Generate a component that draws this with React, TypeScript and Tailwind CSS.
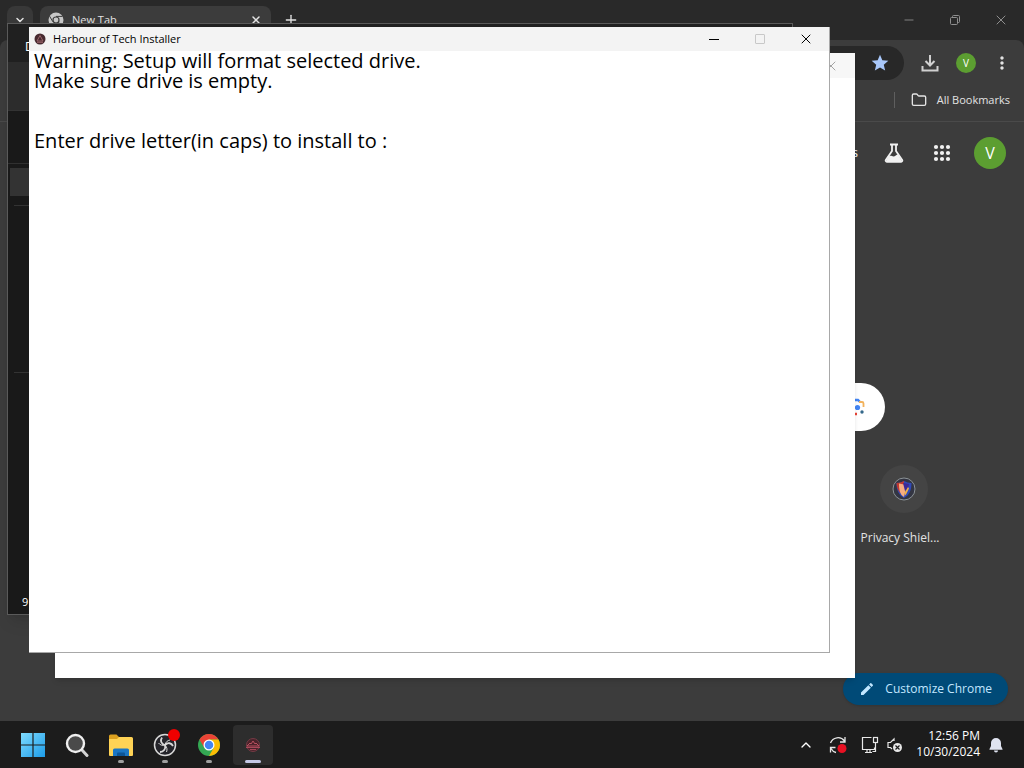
import React from 'react';
import { ChevronDown, ChevronUp, Folder, Minus, Plus, X } from 'lucide-react';
import { MdEdit, MdMoreVert, MdStar } from 'react-icons/md';

const ChromeLogo: React.FC = () => (
  <svg viewBox="0 0 48 48" className="w-6 h-6">
    <circle cx="24" cy="24" r="22" fill="#34a853" />
    <path d="M4.95 13 14.5 29.5 24 24V13H43.05A22 22 0 0 0 4.95 13Z" fill="#ea4335" />
    <path d="M43.05 13H24L33.5 29.5 24 46A22 22 0 0 0 43.05 13Z" fill="#fbbc04" />
    <circle cx="24" cy="24" r="11" fill="#fff" />
    <circle cx="24" cy="24" r="8.5" fill="#4285f4" />
  </svg>
);

const TabFavicon: React.FC = () => (
  <svg viewBox="0 0 16 16" className="w-4 h-4">
    <circle cx="8" cy="8" r="7.5" fill="#c7c7c7" />
    <circle cx="8" cy="8" r="3.6" fill="#3c3c3c" />
    <circle cx="8" cy="8" r="2.4" fill="#c7c7c7" />
    <path d="M8 4.400h6.500M4.900 9.800 1.600 4.200M11.100 9.800 8 15.300" stroke="#3c3c3c" />
  </svg>
);

const LensIcon: React.FC = () => (
  <svg viewBox="0 0 24 24" className="w-6 h-6" fill="none" strokeWidth="2.4">
    <path d="M4 10V8a3 3 0 0 1 3-3" stroke="#ea4335" />
    <path d="M4 14v2a3 3 0 0 0 3 3h5" stroke="#ea4335" />
    <path d="M8 5h5l2 2" stroke="#4285f4" />
    <path d="M14 7h3a1.500 1.500 0 0 1 1.500 1.500V12" stroke="#f2b25c" strokeWidth="1.800" />
    <circle cx="12.5" cy="12.5" r="2.6" fill="#4285f4" />
    <circle cx="17" cy="17" r="1.7" fill="#34688a" />
  </svg>
);

const FlaskIcon: React.FC = () => (
  <svg viewBox="0 0 24 24" className="w-6 h-6" fill="none" stroke="#f1f1f1" strokeWidth="1.8" strokeLinejoin="round">
    <path d="M8 3.500h8M10 4v6L3.800 19a1.200 1.200 0 0 0 1 1.800h14.400a1.200 1.200 0 0 0 1-1.800L14 10V4" />
    <path d="M6.500 15.500c2-1.500 3.500 0 5 0s3-2 4.500-2l4 6.500H4Z" fill="#f1f1f1" stroke="none" />
  </svg>
);

const AppsIcon: React.FC = () => (
  <svg viewBox="0 0 24 24" className="w-6 h-6" fill="#f1f1f1">
    {[6, 12, 18].map((cy) => [6, 12, 18].map((cx) => <circle key={`${cx}-${cy}`} cx={cx} cy={cy} r="2.100" />))}
  </svg>
);

const ShieldIcon: React.FC = () => (
  <svg viewBox="0 0 24 24" className="w-6 h-6">
    <circle cx="12" cy="12" r="11" fill="#333542" stroke="#8b9296" />
    <path d="M4.500 6c3 0 5-1 7.500-2 2.500 1 4.500 2 7.500 2 0 7-2 12-7.500 15-5.500-3-7.500-8-7.500-15Z" fill="#2f49b8" />
    <path d="M4.500 6c3 0 5-1 7.500-2v4l-4 8c-2-3-3.500-6-3.500-10Z" fill="#c0392f" />
    <path d="M7 6.500l5 1 2 4-2 8.500c-4-2-5-7-5-13.500Z" fill="#f6ad80" />
    <path d="M11 6l6 1-1 5-3 2Z" fill="#3c2a96" />
    <path d="M12.500 16l3.500-6 1 1.500-3.500 7Z" fill="#f3b345" />
  </svg>
);

const WindowsLogo: React.FC = () => (
  <svg viewBox="0 0 24 24" className="w-6 h-6">
    <defs>
      <linearGradient id="winBlue" x1="0" y1="0" x2="1" y2="1">
        <stop offset="0" stopColor="#7fdcff" />
        <stop offset="1" stopColor="#1c9be8" />
      </linearGradient>
    </defs>
    <path d="M0 0h11.400v11.400H0ZM12.600 0H24v11.400H12.600ZM0 12.600h11.400V24H0ZM12.600 12.600H24V24H12.600Z" fill="url(#winBlue)" />
  </svg>
);

const SearchIcon: React.FC = () => (
  <svg viewBox="0 0 24 24" className="w-6 h-6" fill="none">
    <path d="M17 17l5 5.500" stroke="#d4d4d4" strokeWidth="3" strokeLinecap="round" />
    <circle cx="10.500" cy="10.500" r="8.500" fill="#4a4a4a" stroke="#efefef" strokeWidth="2.400" />
  </svg>
);

const ExplorerIcon: React.FC = () => (
  <svg viewBox="0 0 26 24" className="w-[26px] h-6">
    <path d="M1 3a1.500 1.500 0 0 1 1.500-1.500h6L11 4h4v6H1Z" fill="#dca11f" />
    <path d="M1 6h8l2-2h12.500A1.500 1.500 0 0 1 25 5.500V22a1 1 0 0 1-1 1H2a1 1 0 0 1-1-1Z" fill="#ffd355" />
    <path d="M5 23v-6a1.500 1.500 0 0 1 1.500-1.500h13A1.500 1.500 0 0 1 21 17v6Z" fill="#1b76c4" />
    <path d="M9 23v-2.500a1 1 0 0 1 1-1h6a1 1 0 0 1 1 1V23Z" fill="#0d5596" />
  </svg>
);

const ObsIcon: React.FC = () => (
  <svg viewBox="0 0 24 24" className="w-6 h-6" fill="none" stroke="#d8d8d8">
    <circle cx="12" cy="12" r="10.500" fill="#24242a" strokeWidth="1.500" />
    <path d="M12 12C8 11 7 7.500 9 4.500M12 12c3-3 6.500-2 8 1M12 12c1 4-1.500 7-5 7" strokeWidth="1.800" />
    <path d="M12 12c-2.500 1-5 0-6.500-2M12 12c.5-3 2.500-4.500 5-5M12 12c2 2 2.500 4.500 1.500 7" strokeWidth="1" />
  </svg>
);

const TitleIcon: React.FC = () => (
  <svg viewBox="0 0 12 12" className="w-3 h-3">
    <circle cx="6" cy="6" r="5.500" fill="#472a30" />
    <path d="M6 2.500 9 8H3ZM3 9.300h6" fill="none" stroke="#9a646b" />
  </svg>
);

const InstallerIcon: React.FC = () => (
  <svg viewBox="0 0 16 16" className="w-4 h-4">
    <circle cx="8" cy="8" r="6.500" fill="#4a222a" stroke="#743b45" />
    <path d="M2 9l3-3 1 1 2-3 2 3 1-1 3 3Z" fill="none" stroke="#b8505f" />
    <path d="M1 10.500h14M5 12.500h6" stroke="#a8485a" />
  </svg>
);

const RestoreIcon: React.FC = () => (
  <svg viewBox="0 0 12 12" className="w-3 h-3" fill="none" stroke="currentColor">
    <rect x="1.500" y="3.500" width="7" height="7" rx="1" />
    <path d="M3.500 3.500V2.500a1 1 0 0 1 1-1h5a1 1 0 0 1 1 1v5a1 1 0 0 1-1 1h-1" />
  </svg>
);

const SyncIcon: React.FC = () => (
  <svg viewBox="0 0 20 20" className="w-5 h-5" fill="none" stroke="#e8e8e8" strokeWidth="1.300">
    <path d="M2.500 8A8 8 0 0 1 16.500 6M17 2v5h-5M8 17.500a8 8 0 0 1-5-4M7.500 12.500h-5v5" />
    <circle cx="14" cy="13.500" r="4.500" fill="#e81123" stroke="none" />
  </svg>
);

const NetworkIcon: React.FC = () => (
  <svg viewBox="0 0 20 20" className="w-5 h-5" fill="none" stroke="#e8e8e8" strokeWidth="1.200">
    <path d="M11.500 2.500h-9v12h12v-2M7 14.500v3M10 14.500v3M5 17.500h7" />
    <rect x="13.500" y="2.500" width="4" height="5" />
    <path d="M15.500 7.500v9h-3" />
  </svg>
);

const MutedIcon: React.FC = () => (
  <svg viewBox="0 0 18 18" className="w-[18px] h-[18px]" fill="none" stroke="#e8e8e8" strokeWidth="1.200">
    <path d="M8 5V3L4.500 6.500H2v5h2.500L6 13" />
    <circle cx="11.500" cy="11.500" r="4.500" fill="#e8e8e8" stroke="none" />
    <path d="M9.500 9.500l4 4M13.500 9.500l-4 4" stroke="#1c1c1c" />
  </svg>
);

const BellIcon: React.FC = () => (
  <svg viewBox="0 0 16 16" className="w-4 h-4" fill="#dfe3f0">
    <path d="M8 1a5 5 0 0 0-5 5v3L1.500 12v.700h13V12L13 9V6a5 5 0 0 0-5-5ZM6 13.500a2 2 0 0 0 4 0Z" />
  </svg>
);

const taskbarApps = [
  { name: "Start", icon: <WindowsLogo />, state: "closed" },
  { name: "Search", icon: <SearchIcon />, state: "closed" },
  { name: "File Explorer", icon: <ExplorerIcon />, state: "open" },
  { name: "OBS Studio", icon: <ObsIcon />, state: "open", recording: true },
  { name: "Google Chrome", icon: <ChromeLogo />, state: "open" },
  { name: "Harbour of Tech Installer", icon: <InstallerIcon />, state: "active" }
];

const Browser: React.FC = () => (
  <section aria-label="Chrome" className="h-full flex flex-col bg-[#292929] text-[#e3e3e3]">
    <header className="h-10 flex shrink-0">
      <div className="flex-1 flex pl-[7px] pt-[6px]">
        <button aria-label="Search tabs" className="w-[26px] h-7 rounded-lg bg-[#383838] flex items-center justify-center">
          <ChevronDown className="w-3 h-3" strokeWidth={3} />
        </button>
        <div className="w-[231px] ml-[7px] pl-2 pr-[9px] flex items-center gap-2 rounded-t-lg bg-[#3c3c3c] pb-[6px]">
          <TabFavicon />
          <span className="flex-1 text-[11px]">New Tab</span>
          <button aria-label="Close tab">
            <X className="w-3 h-3" strokeWidth={3} />
          </button>
        </div>
        <button aria-label="New tab" className="w-10 h-7 flex items-center justify-center">
          <Plus className="w-4 h-4" />
        </button>
      </div>
      <div className="flex text-[#8f8f8f]">
        <button aria-label="Minimize browser" className="w-[46px] flex items-center justify-center">
          <Minus className="w-3.5 h-3.5" strokeWidth={1.5} />
        </button>
        <button aria-label="Restore browser" className="w-[46px] flex items-center justify-center">
          <RestoreIcon />
        </button>
        <button aria-label="Close browser" className="w-[46px] flex items-center justify-center">
          <X className="w-4 h-4" strokeWidth={1.5} />
        </button>
      </div>
    </header>

    <div className="bg-[#3c3c3c] rounded-t-lg border-b border-[#4a4a4a] shrink-0">
      <div className="h-[46px] flex items-center pl-24 pr-3">
        <div className="flex-1 h-[34px] rounded-full bg-[#282828] flex items-center justify-end pr-[14px]">
          <button aria-label="Edit bookmark">
            <MdStar className="w-5 h-5 text-[#a8c7fa]" />
          </button>
        </div>
        <div className="flex items-center gap-[14px] ml-[14px]">
          <button aria-label="Downloads">
            <svg viewBox="0 0 24 24" className="w-6 h-6" fill="none" stroke="#d0d0d0" strokeWidth="2">
              <path d="M12 4v10M7.500 10l4.500 4.500 4.500-4.500M4.500 15v4.500h15V15" />
            </svg>
          </button>
          <button aria-label="Profile" className="w-5 h-5 rounded-full bg-[#5c9e31] text-[10px] text-white">
            V
          </button>
          <button aria-label="Chrome menu" className="ml-0.5">
            <MdMoreVert className="w-5 h-5" />
          </button>
        </div>
      </div>
      <div className="h-[35px] flex items-center justify-end pr-[14px] pb-[7px]">
        <span className="w-px h-4 bg-[#5f5f5f] mr-4" />
        <button className="flex items-center gap-2.5 text-[11px]">
          <Folder className="w-4 h-4" strokeWidth={2} />
          All Bookmarks
        </button>
      </div>
    </div>

    <main className="relative flex-1 bg-[#3c3c3c]">
      <nav className="flex items-center justify-end gap-6 pt-[15px] pr-[18px]">
        <a href="#images" className="text-[12px] text-white">Images</a>
        <FlaskIcon />
        <button aria-label="Google apps">
          <AppsIcon />
        </button>
        <button aria-label="Google Account" className="w-8 h-8 -ml-1 rounded-full bg-[#5c9e31] text-[16px] font-medium text-white">
          V
        </button>
      </nav>
      <div className="flex flex-col items-center mt-[214px] px-8">
        <label className="w-full max-w-[746px] h-12 rounded-full bg-white flex items-center pr-4">
          <input aria-label="Search Google" className="flex-1 bg-transparent outline-none" />
          <LensIcon />
        </label>
        <div className="w-full max-w-[896px] mt-[34px] flex justify-end">
          <a href="#shield" className="w-28 flex flex-col items-center gap-4">
            <span className="w-12 h-12 rounded-full bg-[#444444] flex items-center justify-center">
              <ShieldIcon />
            </span>
            <span className="text-[12px] leading-[18px] pr-2">Privacy Shiel...</span>
          </a>
        </div>
      </div>
      <button className="absolute right-4 bottom-4 h-8 px-4 rounded-full bg-[#004a77] text-[#c2e7ff] text-[12px] font-medium flex items-center gap-2.5 shadow">
        <MdEdit className="w-4 h-4" />
        Customize Chrome
      </button>
    </main>
  </section>
);

const DarkWindow: React.FC = () => (
  <section aria-label="File Explorer" className="absolute left-[7px] top-[23px] w-[786px] h-[592px] flex flex-col bg-[#191919] border border-[#5a5a5a] text-white shadow-lg">
    <div className="h-[38px] pl-[17px] flex items-center bg-[#202020] text-[12px] pt-2">D</div>
    <div className="h-12 bg-[#2c2c2c]" />
    <div className="h-[54px] border-t border-b border-t-[#333333] border-b-[#303030]" />
    <div className="h-7 mt-1 ml-0.5 bg-[#333333]" />
    <div className="h-[168px] mt-[9px] ml-1.5 border-t border-b border-[#333333]" />
    <div className="mt-auto h-6 pl-[14px] text-[11px] leading-6">9</div>
  </section>
);

const BackWindow: React.FC = () => (
  <section aria-label="Console" className="absolute left-[55px] top-[53px] w-[800px] h-[625px] bg-white shadow-md">
    <div className="h-[25px] flex items-center justify-end pr-4 bg-[#f7f7f7] text-[#a3a3a3]">
      <X className="w-4 h-4" strokeWidth={1.5} />
    </div>
  </section>
);

const InstallerWindow: React.FC = () => (
  <section aria-label="Harbour of Tech Installer" className="absolute left-[29px] top-[27px] w-[801px] h-[626px] bg-white border-r border-b border-[#a8a8a8] text-black">
    <header className="h-6 flex items-center bg-[#f3f3f3] pl-[5px]">
      <TitleIcon />
      <h1 className="flex-1 ml-[7px] text-[11px]">Harbour of Tech Installer</h1>
      <button aria-label="Minimize" className="w-[46px] h-full flex items-center justify-center">
        <span className="w-[10px] h-px bg-black" />
      </button>
      <button aria-label="Maximize" disabled className="w-[46px] h-full flex items-center justify-center">
        <span className="w-[10px] h-[10px] border border-[#c8c8c8] rounded-[1px]" />
      </button>
      <button aria-label="Close" className="w-[46px] h-full flex items-center justify-center">
        <X className="w-4 h-4" strokeWidth={1.5} />
      </button>
    </header>
    <div className="pl-[5px] text-[20px] leading-5">
      <p>Warning: Setup will format selected drive.</p>
      <p>Make sure drive is empty.</p>
      <div className="flex mt-10">
        <label htmlFor="drive">Enter drive letter(in caps) to install to :</label>
        <input id="drive" maxLength={1} className="flex-1 h-5 ml-1 bg-transparent outline-none" />
      </div>
    </div>
  </section>
);

const Taskbar: React.FC = () => (
  <footer className="h-[47px] shrink-0 flex items-center justify-between bg-[#1c1c1c] pl-[13px] pr-5 text-white">
    <div className="flex gap-1">
      {taskbarApps.map((app) => (
        <button
          key={app.name}
          aria-label={app.name}
          className={`relative w-10 h-10 rounded flex items-center justify-center ${app.state === "active" ? "bg-[#2d2d2d]" : ""}`}
        >
          {app.icon}
          {app.recording && <span className="absolute right-[5px] top-1 w-3 h-3 rounded-full bg-[#f00000]" />}
          {app.state === "open" && <span className="absolute bottom-[2px] w-[6px] h-[3px] rounded-full bg-[#a0a0a0]" />}
          {app.state === "active" && <span className="absolute bottom-[2px] w-4 h-[3px] rounded-full bg-[#c5c8e6]" />}
        </button>
      ))}
    </div>
    <div className="flex items-center">
      <button aria-label="Show hidden icons" className="mr-3.5">
        <ChevronUp className="w-4 h-4" />
      </button>
      <button aria-label="Sync" className="mr-3">
        <SyncIcon />
      </button>
      <button aria-label="Network and sound" className="flex items-center gap-[6px]">
        <NetworkIcon />
        <MutedIcon />
      </button>
      <button className="ml-3 pb-0.5 text-right text-[12px] leading-4">
        <span className="block">12:56 PM</span>
        <span className="block">10/30/2024</span>
      </button>
      <button aria-label="Notifications" className="ml-2">
        <BellIcon />
      </button>
    </div>
  </footer>
);

const App: React.FC = () => {
  return (
    <div className="h-screen flex flex-col overflow-hidden font-['Open_Sans',sans-serif]">
      <div className="relative flex-1 min-h-0">
        <Browser />
        <DarkWindow />
        <BackWindow />
        <InstallerWindow />
      </div>
      <Taskbar />
    </div>
  );
};

export default App;
